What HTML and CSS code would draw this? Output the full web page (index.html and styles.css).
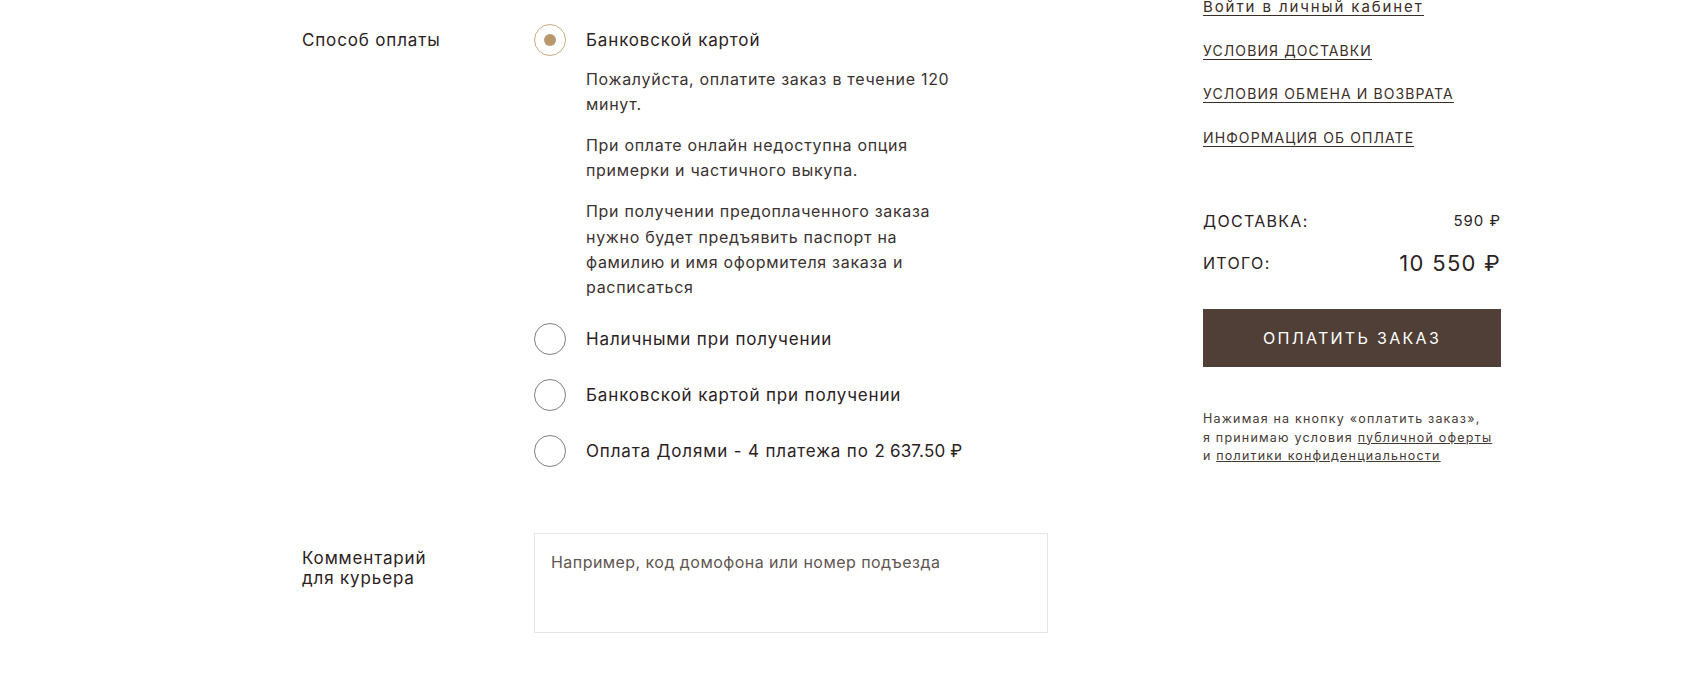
FILE: index.html
```html
<!DOCTYPE html>
<html lang="ru">
<head>
    <meta charset="UTF-8">
    <meta name="viewport" content="width=device-width, initial-scale=1.0">
    <title>Оформление заказа</title>
    <link rel="stylesheet" href="styles.css">
</head>
<body>
    <div class="checkout">
        <div class="form">
            <div class="form-row">
                <div class="form-label">Способ оплаты</div>
                <div class="options">
                    <label class="option checked">
                        <input type="radio" name="payment" checked>
                        <span class="radio"></span>
                        <span class="option-body">
                            <span class="option-title">Банковской картой</span>
                            <span class="option-desc">
                                <span class="para">Пожалуйста, оплатите заказ в течение 120 минут.</span>
                                <span class="para">При оплате онлайн недоступна опция примерки и частичного выкупа.</span>
                                <span class="para">При получении предоплаченного заказа нужно будет предъявить паспорт на фамилию и имя оформителя заказа и расписаться</span>
                            </span>
                        </span>
                    </label>
                    <label class="option">
                        <input type="radio" name="payment">
                        <span class="radio"></span>
                        <span class="option-body">
                            <span class="option-title">Наличными при получении</span>
                        </span>
                    </label>
                    <label class="option">
                        <input type="radio" name="payment">
                        <span class="radio"></span>
                        <span class="option-body">
                            <span class="option-title">Банковской картой при получении</span>
                        </span>
                    </label>
                    <label class="option">
                        <input type="radio" name="payment">
                        <span class="radio"></span>
                        <span class="option-body">
                            <span class="option-title">Оплата Долями - 4 платежа по <span class="num">2 637.50 ₽</span></span>
                        </span>
                    </label>
                </div>
            </div>

            <div class="form-row comment-row">
                <label class="form-label comment-label" for="comment">Комментарий для курьера</label>
                <textarea id="comment" placeholder="Например, код домофона или номер подъезда"></textarea>
            </div>
        </div>

        <div class="summary">
            <ul class="links">
                <li><a href="#" class="login">Войти в личный кабинет</a></li>
                <li><a href="#">Условия доставки</a></li>
                <li><a href="#">Условия обмена и возврата</a></li>
                <li><a href="#">Информация об оплате</a></li>
            </ul>

            <div class="totals">
                <div class="total-line">
                    <span>Доставка:</span>
                    <span class="price">590 ₽</span>
                </div>
                <div class="total-line grand">
                    <span>Итого:</span>
                    <span class="price">10 550 ₽</span>
                </div>
            </div>

            <button class="pay-btn">Оплатить заказ</button>

            <p class="agreement">
                Нажимая на кнопку «оплатить заказ»,<br>
                я принимаю условия <a href="#">публичной оферты</a><br>
                и <a href="#">политики конфиденциальности</a>
            </p>
        </div>
    </div>
</body>
</html>
```

FILE: styles.css
```css
body {
    margin: 0;
    font-family: Inter, 'Noto Sans', Arial, sans-serif;
    color: #2b221e;
    background: #fff;
}
.checkout {
    display: flex;
    align-items: flex-start;
    padding-left: 302px;
}
.form {
    width: 746px;
    padding-top: 24px;
}
.form-row {
    display: grid;
    grid-template-columns: 232px 514px;
}
.form-label {
    font-size: 17px;
    line-height: 32px;
    letter-spacing: 0.85px;
}
.options {
    display: flex;
    flex-direction: column;
    gap: 24px;
}
.option {
    display: flex;
    gap: 20px;
    cursor: pointer;
}
.option input {
    display: none;
}
.radio {
    flex: none;
    width: 32px;
    height: 32px;
    box-sizing: border-box;
    border: 1px solid #85807c;
    border-radius: 50%;
    display: flex;
    align-items: center;
    justify-content: center;
}
.option.checked .radio {
    border-color: #c9ac80;
}
.option.checked .radio::after {
    content: '';
    width: 12px;
    height: 12px;
    border-radius: 50%;
    background: #b9996b;
}
.option-body {
    display: flex;
    flex-direction: column;
}
.option-title {
    font-size: 17px;
    line-height: 32px;
    letter-spacing: 0.85px;
}
.option-title .num {
    letter-spacing: 0.2px;
}
.option-desc {
    display: flex;
    flex-direction: column;
    gap: 16px;
    width: 378px;
    margin: 10.5px 0 -1px;
    font-size: 16px;
    line-height: 25.2px;
    letter-spacing: 0.7px;
    color: #3a3230;
}
.comment-row {
    margin-top: 66px;
}
.comment-label {
    padding-top: 16px;
    max-width: 150px;
    line-height: 19.5px;
}
textarea {
    width: 514px;
    height: 100px;
    box-sizing: border-box;
    padding: 18px 16px;
    border: 1px solid #e7e5e4;
    font-family: inherit;
    font-size: 16px;
    line-height: 20px;
    letter-spacing: 0.45px;
    color: #2b221e;
    resize: none;
    outline: none;
}
textarea::placeholder {
    color: #5f5652;
}
.summary {
    width: 298px;
    margin-left: 155px;
    margin-top: -1px;
}
.links {
    list-style: none;
    margin: 0;
    padding: 0;
    display: flex;
    flex-direction: column;
    gap: 26.5px;
}
.links li {
    display: flex;
}
.links a {
    display: block;
    font-size: 14px;
    line-height: 16px;
    letter-spacing: 1.1px;
    text-transform: uppercase;
    color: #3b2e28;
    text-decoration: none;
    border-bottom: 1px solid #3b2e28;
}
.links a.login {
    font-size: 15px;
    letter-spacing: 1.9px;
    text-transform: none;
}
.totals {
    margin-top: 64.5px;
}
.total-line {
    display: flex;
    justify-content: space-between;
    align-items: center;
    font-size: 16px;
    line-height: 20px;
    letter-spacing: 1.3px;
    text-transform: uppercase;
}
.total-line .price {
    font-size: 15px;
    letter-spacing: 1px;
}
.total-line.grand {
    margin-top: 16.5px;
    line-height: 30px;
}
.total-line.grand .price {
    font-size: 22px;
    letter-spacing: 1.3px;
}
.pay-btn {
    display: block;
    width: 100%;
    height: 58px;
    margin-top: 31.5px;
    border: none;
    background: #4f3f36;
    color: #fff;
    font-family: inherit;
    font-size: 16px;
    letter-spacing: 2.3px;
    text-transform: uppercase;
    cursor: pointer;
}
.agreement {
    margin: 43px 0 0;
    font-size: 12.5px;
    line-height: 18.5px;
    letter-spacing: 1.2px;
    color: #453a35;
}
.agreement a {
    color: inherit;
}
```
